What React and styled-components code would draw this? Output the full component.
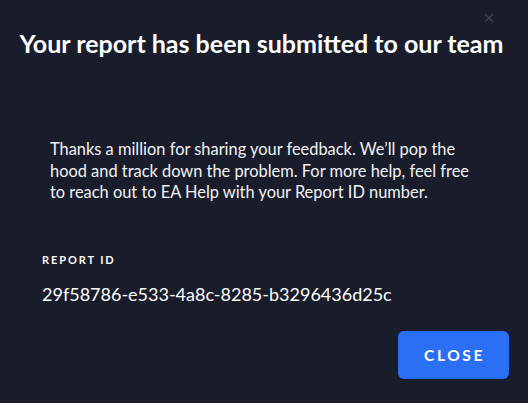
import styled, { createGlobalStyle } from "styled-components";

const GlobalStyle = createGlobalStyle`
  html, body {
    margin: 0;
    padding: 0;
    background: #181c2b;
  }
  body {
    font-family: Lato, "Noto Sans", sans-serif;
    color: #ffffff;
  }
`;

const Modal = styled.div`
  position: relative;
  width: 528px;
  height: 403px;
  box-sizing: border-box;
  background: #181c2b;
  padding: 29px 19px 0 19px;
  display: flex;
  flex-direction: column;
  overflow: hidden;
`;

const CloseIcon = styled.button`
  position: absolute;
  top: 11px;
  right: 32px;
  width: 14px;
  height: 14px;
  padding: 0;
  border: none;
  background: transparent;
  color: #3d4252;
  cursor: pointer;
  display: flex;
  align-items: center;
  justify-content: center;
`;

const Title = styled.h1`
  margin: 0 5px 0 0;
  font-size: 25px;
  font-weight: 700;
  line-height: 28px;
  text-align: center;
  white-space: nowrap;
`;

const Body = styled.p`
  margin: 81px 0 0 31px;
  width: 425px;
  font-size: 16.4px;
  line-height: 21.5px;
  color: #f2f3f6;
`;

const Label = styled.div`
  margin: 50px 0 0 23px;
  font-size: 11px;
  line-height: 14px;
  font-weight: 700;
  letter-spacing: 1.9px;
  text-transform: uppercase;
`;

const ReportId = styled.div`
  margin: 16px 0 0 23px;
  font-size: 18px;
  line-height: 22px;
`;

const Footer = styled.div`
  display: flex;
  justify-content: flex-end;
  margin-top: 26px;
`;

const Button = styled.button`
  width: 111px;
  height: 48px;
  border: none;
  border-radius: 6px;
  background: #2b6ff6;
  color: #ffffff;
  font-family: Lato, "Noto Sans", sans-serif;
  font-size: 15.5px;
  font-weight: 700;
  letter-spacing: 2.6px;
  padding: 0 0 0 2px;
  cursor: pointer;
`;

export default function App() {
  return (
    <>
      <GlobalStyle />
      <Modal>
        <CloseIcon aria-label="Close">
          <svg width="10" height="10" viewBox="0 0 10 10">
            <path d="M1 1L9 9M9 1L1 9" stroke="currentColor" strokeWidth="1.4" />
          </svg>
        </CloseIcon>
        <Title>Your report has been submitted to our team</Title>
        <Body>
          Thanks a million for sharing your feedback. We’ll pop the hood and
          track down the problem. For more help, feel free to reach out to EA
          Help with your Report ID number.
        </Body>
        <Label>Report ID</Label>
        <ReportId>29f58786-e533-4a8c-8285-b3296436d25c</ReportId>
        <Footer>
          <Button>CLOSE</Button>
        </Footer>
      </Modal>
    </>
  );
}
